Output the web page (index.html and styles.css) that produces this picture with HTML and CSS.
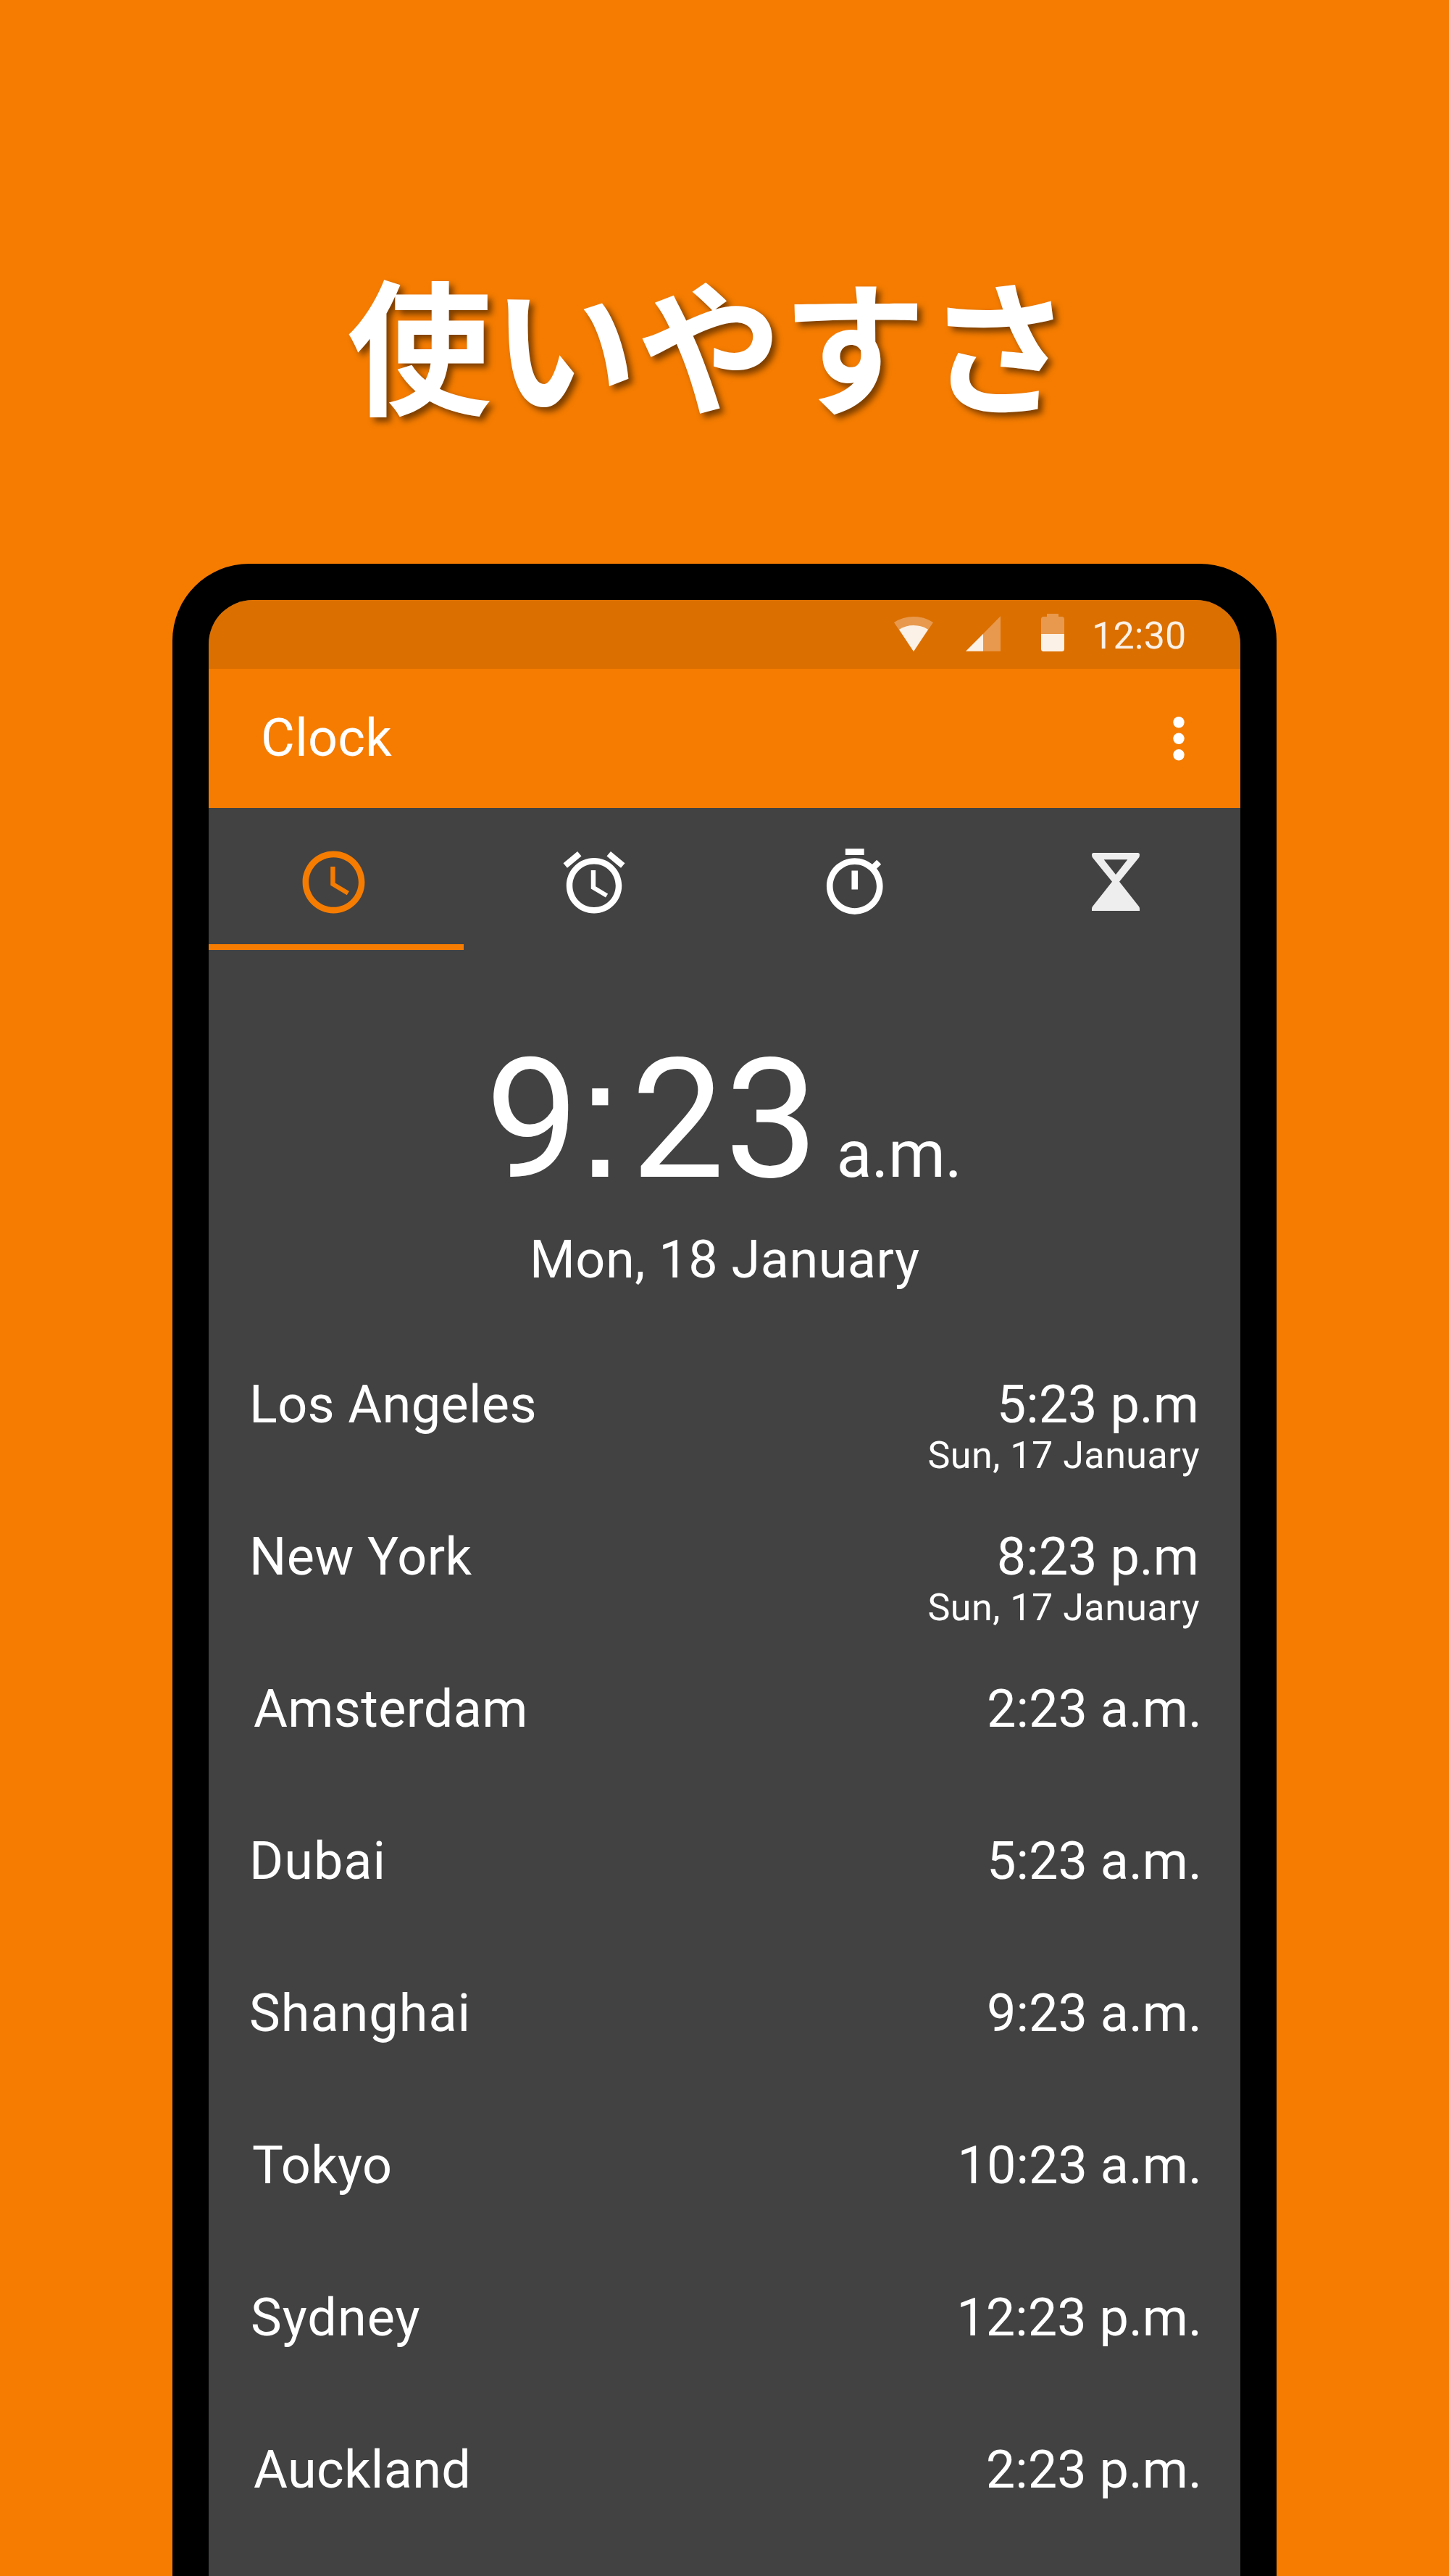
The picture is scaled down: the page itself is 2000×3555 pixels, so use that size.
FILE: index.html
```html
<!DOCTYPE html>
<html lang="ja">
<head>
<meta charset="utf-8">
<title>Clock</title>
<link rel="stylesheet" href="styles.css">
</head>
<body>
<main class="promo">
  <h1 class="headline">使いやすさ</h1>
  <section class="phone" lang="en">
    <div class="screen">
      <header class="status-bar">
        <svg class="status-wifi" viewBox="0 0 54 48"><path class="dim" d="M0 8Q12 0 27 0T54 8L27 48Z"/><path class="lit" d="M7 17.7Q16 12 27 12T47 17.7L27 48Z"/></svg>
        <svg class="status-signal" viewBox="0 0 48 48.600"><path class="dim" d="M48 0V48.600H24V24.500Z"/><path class="lit" d="M24 24.500V48.600H0Z"/></svg>
        <svg class="status-battery" viewBox="0 0 32 52"><path class="dim" d="M8 0H24V4H28.500Q32 4 32 7.500V28H0V7.500Q0 4 3.500 4H8Z"/><path class="lit" d="M0 28H32V48.500Q32 52 28.500 52H3.500Q0 52 0 48.500Z"/></svg>
        <span class="status-time">12:30</span>
      </header>
      <div class="app-bar">
        <h2 class="app-title">Clock</h2>
        <svg class="menu-dots" viewBox="0 0 16 54"><circle cx="8" cy="7.700" r="7.700"/><circle cx="8" cy="30.200" r="7.700"/><circle cx="8" cy="52.700" r="7.700"/></svg>
      </div>
      <nav class="tabs">
        <div class="tab tab-first">
          <svg class="icon icon-clock" viewBox="0 0 24 24"><path d="M11.990 2C6.470 2 2 6.480 2 12s4.470 10 9.990 10C17.520 22 22 17.520 22 12S17.520 2 11.990 2zM12 20c-4.420 0-8-3.580-8-8s3.580-8 8-8 8 3.580 8 8-3.580 8-8 8zm.5-13H11v6l5.250 3.150.75-1.230-4.500-2.670z"/></svg>
        </div>
        <div class="tab">
          <svg class="icon icon-alarm" viewBox="0 0 24 24"><path d="M22 5.720l-4.600-3.860-1.290 1.530 4.600 3.860L22 5.720zM7.880 3.390L6.600 1.860 2 5.710l1.290 1.530 4.590-3.850zM12.500 8H11v6l4.750 2.850.75-1.230-4-2.370V8zM12 4c-4.970 0-9 4.030-9 9s4.020 9 9 9c4.970 0 9-4.030 9-9s-4.030-9-9-9zm0 16c-3.870 0-7-3.130-7-7s3.130-7 7-7 7 3.130 7 7-3.130 7-7 7z"/></svg>
        </div>
        <div class="tab">
          <svg class="icon icon-timer" viewBox="0 0 24 24"><path d="M15 1H9v2h6V1zm-4 13h2V8h-2v6zm8.030-6.610l1.420-1.420c-.43-.51-.9-.99-1.410-1.410l-1.420 1.420C16.070 4.740 14.120 4 12 4c-4.970 0-9 4.030-9 9s4.020 9 9 9 9-4.030 9-9c0-2.120-.74-4.070-1.970-5.610zM12 20c-3.870 0-7-3.130-7-7s3.130-7 7-7 7 3.130 7 7-3.130 7-7 7z"/></svg>
        </div>
        <div class="tab tab-last">
          <svg class="icon icon-hourglass" viewBox="0 0 66 80"><path fill-rule="evenodd" d="M2 0H64Q66 0 66 2.500Q66 4.500 65 6.500L38 39.700L65 74Q66 75.500 66 77V80H0V77Q0 75.500 1 74L28 39.700L1 6.500Q0 4.500 0 2.500Q0 0 2 0ZM16.700 9.300L33 30L49.300 9.300Z"/></svg>
        </div>
      </nav>
      <section class="current">
        <div class="current-time"><span class="digits">9<span class="colon">:</span>23</span><span class="period">a.m.</span></div>
        <div class="current-date">Mon, 18 January</div>
      </section>
      <ul class="cities">
        <li class="city"><span class="name">Los Angeles</span><div class="when when-dated"><span class="time">5:23 p.m</span><span class="date">Sun, 17 January</span></div></li>
        <li class="city"><span class="name">New York</span><div class="when when-dated"><span class="time">8:23 p.m</span><span class="date">Sun, 17 January</span></div></li>
        <li class="city"><span class="name inset-l">Amsterdam</span><div class="when"><span class="time">2:23 a.m.</span></div></li>
        <li class="city"><span class="name name-wide">Dubai</span><div class="when"><span class="time">5:23 a.m.</span></div></li>
        <li class="city"><span class="name name-wide">Shanghai</span><div class="when"><span class="time">9:23 a.m.</span></div></li>
        <li class="city"><span class="name inset-m">Tokyo</span><div class="when"><span class="time">10:23 a.m.</span></div></li>
        <li class="city"><span class="name name-wide inset-s">Sydney</span><div class="when"><span class="time">12:23 p.m.</span></div></li>
        <li class="city"><span class="name inset-l">Auckland</span><div class="when"><span class="time">2:23 p.m.</span></div></li>
      </ul>
    </div>
  </section>
</main>
</body>
</html>
```
FILE: styles.css
```css
* { box-sizing: border-box; margin: 0; padding: 0; }

html, body { height: 3555px; overflow: hidden; }

body {
  background: #f57c00;
  color: #fff;
  font-family: Roboto, "Noto Sans CJK JP", sans-serif;
}

svg { display: block; flex: none; }

.promo {
  height: 3555px;
  padding-top: 350px;
  overflow: hidden;
}

.headline {
  height: 240px;
  padding-left: 479px;
  font: 700 200px/240px "Noto Sans CJK JP", sans-serif;
  white-space: nowrap;
  text-shadow: 6px 6px 8px rgba(0, 0, 0, 0.5);
}

.phone {
  width: 1524px;
  height: 2900px;
  margin: 188px 0 0 238px;
  padding: 50px;
  border-radius: 106px;
  background: #000;
}

.screen {
  height: 2800px;
  border-radius: 61px;
  background: #424242;
  overflow: hidden;
}

.status-bar {
  display: flex;
  height: 95px;
  padding: 0 76px 0 946px;
  background: #db6f00;
}

.dim { fill: #e8994d; }
.lit { fill: #fbf1e6; }

.status-wifi { width: 54px; height: 48px; margin-top: 23px; }
.status-signal { width: 48px; height: 49px; margin: 22px 0 0 45px; }
.status-battery { width: 32px; height: 52px; margin: 19px 0 0 56px; }

.status-time {
  margin: 20px 0 0 38px;
  font-size: 52px;
  line-height: 60px;
  letter-spacing: 0.2px;
  color: #fbf1e6;
}

.app-bar {
  display: flex;
  justify-content: space-between;
  height: 192px;
  padding: 66px 77px 0 72px;
  background: #f57c00;
}

.app-title { font-size: 72px; font-weight: 400; line-height: 84px; margin-top: -12px; letter-spacing: 0.3px; }

.menu-dots { width: 16px; height: 54px; overflow: visible; fill: #fff; }

.tabs {
  display: grid;
  grid-template-columns: 352px 360px 360px 352px;
  height: 196px;
}

.tab { display: flex; justify-content: center; align-items: flex-start; }
.tab-first { padding-right: 8px; border-bottom: 8px solid #f57c00; }
.tab-last { padding-left: 8px; }

.icon { fill: #fff; }
.icon-clock { width: 103px; height: 103px; margin-top: 50.500px; fill: #f57c00; }
.icon-alarm { width: 102px; height: 102px; margin-top: 51.500px; }
.icon-timer { width: 103.500px; height: 103.500px; margin-top: 52px; }
.icon-hourglass { width: 66px; height: 80px; margin-top: 62px; fill: #eee; }

.current { padding-top: 100px; }

.current-time {
  display: flex;
  align-items: baseline;
  height: 270px;
  padding-left: 382px;
  line-height: 270px;
  white-space: nowrap;
}

.digits { font-size: 230px; }

.colon {
  margin-left: -3px;
  font: 231px/1 "Liberation Sans", sans-serif;
  letter-spacing: 10.5px;
}

.period { margin-left: 25px; font-size: 90px; letter-spacing: -0.6px; }

.current-date {
  margin-top: 16px;
  padding-left: 443px;
  font-size: 72px;
  line-height: 84px;
  letter-spacing: 0.5px;
  white-space: nowrap;
}

.cities { padding: 116px 52px 0 56px; list-style: none; }

.city {
  display: flex;
  justify-content: space-between;
  height: 210px;
  font-size: 72px;
  line-height: 84px;
  white-space: nowrap;
}

.name { letter-spacing: 0.35px; }
.name-wide { letter-spacing: 1px; }
.inset-s { padding-left: 2px; }
.inset-m { padding-left: 4px; }
.inset-l { padding-left: 6px; }

.when { display: flex; flex-direction: column; align-items: flex-end; }
.when-dated { padding-right: 4px; }
.time { padding-right: 1px; }
.date { font-size: 52px; line-height: 60px; margin-top: -2px; letter-spacing: 0.5px; }
```
